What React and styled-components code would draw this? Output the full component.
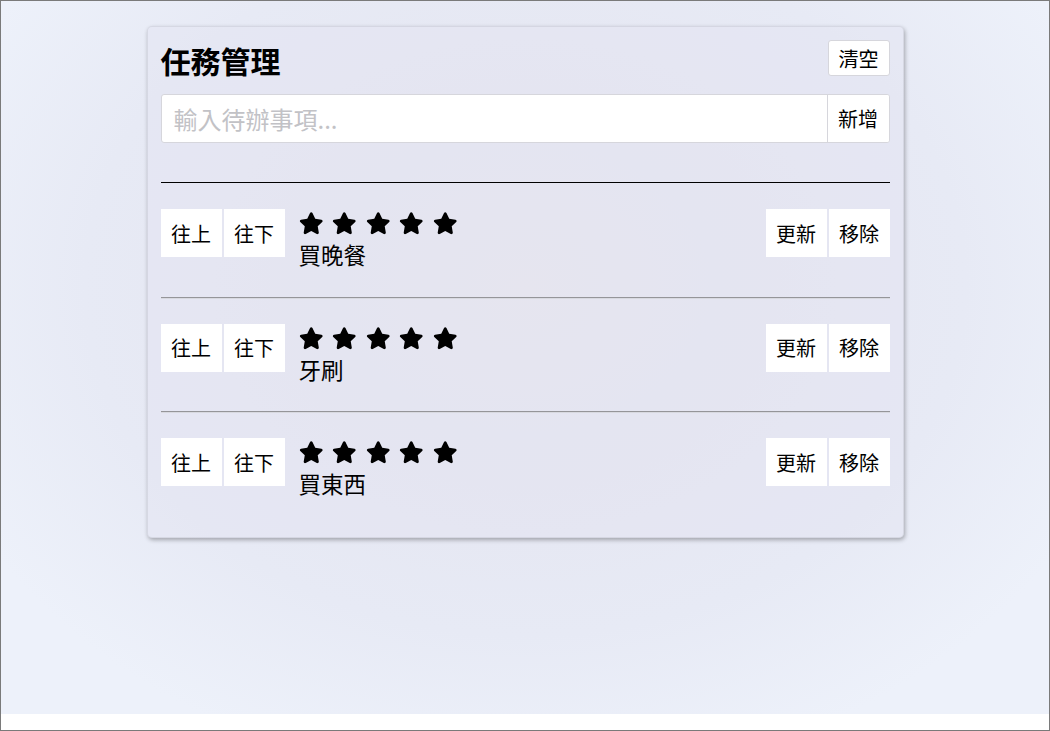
import React, { useState } from "react";
import styled, { createGlobalStyle } from "styled-components";
import { FaStar } from "react-icons/fa";

const Global = createGlobalStyle`
  html, body { margin: 0; padding: 0; background: #fff; }
  * { box-sizing: border-box; }
  body { font-family: "Noto Sans CJK TC", "Noto Sans", sans-serif; color: #000; }
`;

const Frame = styled.div`
  height: 731px;
  border: 1px solid #7a7a7a;
  background: #fff;
`;

const Backdrop = styled.div`
  height: 713px;
  padding-top: 25px;
  background: radial-gradient(ellipse 60% 70% at 50% 40%, #e8e7ef 0%, #e5e6f1 30%, #e7eaf5 70%, #edf1fa 100%);
`;

const Card = styled.div`
  width: 757px;
  margin: 0 auto;
  padding: 13px 13px 11px 13px;
  border: 1px solid rgba(0, 0, 0, 0.07);
  border-radius: 5px;
  background: rgba(225, 227, 240, 0.35);
  box-shadow: 1px 2px 4px rgba(0, 0, 0, 0.3);
`;

const Header = styled.div`
  display: flex;
  align-items: center;
  justify-content: space-between;
  height: 36px;
`;

const Title = styled.h1`
  margin: 0;
  font-size: 30px;
  font-weight: 700;
  line-height: 36px;
  position: relative;
  top: 2px;
`;

const SmallButton = styled.button`
  height: 36px;
  padding: 0 10px;
  font-family: inherit;
  font-size: 20px;
  color: #000;
  background: #fff;
  border: 1px solid #d6d6dc;
  border-radius: 3px;
`;

const InputGroup = styled.div`
  display: flex;
  margin-top: 18px;
  height: 49px;
  background: #fff;
  border: 1px solid #d6d6dc;
  border-radius: 3px;
  overflow: hidden;
`;

const TextInput = styled.input`
  flex: 1;
  border: none;
  outline: none;
  padding: 0 12px;
  font-family: inherit;
  font-size: 24px;
  background: transparent;
  &::placeholder { color: #c2c2c6; }
`;

const AddButton = styled.button`
  width: 62px;
  border: none;
  border-left: 1px solid #d6d6dc;
  background: #fff;
  font-family: inherit;
  font-size: 20px;
  color: #000;
  padding: 0;
`;

const List = styled.ul`
  list-style: none;
  margin: 39px 0 0;
  padding: 0;
  border-top: 1px solid #000;
`;

const Row = styled.li`
  display: flex;
  align-items: flex-start;
  justify-content: space-between;
  padding: 26px 0;
  border-bottom: ${(p) => (p.$last ? "none" : "1px solid #959599")};
  box-shadow: ${(p) => (p.$last ? "none" : "0 1px 0 #d8d9e0")};
`;

const Left = styled.div`
  display: flex;
  align-items: flex-start;
  gap: 14px;
`;

const BtnPair = styled.div`
  display: flex;
  gap: 2px;
`;

const RowButton = styled.button`
  height: 48px;
  width: 61px;
  padding: 0;
  border: none;
  background: #fff;
  font-family: inherit;
  font-size: 20px;
  color: #000;
`;

const Info = styled.div`
  display: flex;
  flex-direction: column;
`;

const Stars = styled.div`
  display: flex;
  gap: 9px;
  height: 29px;
  padding-top: 2px;
  font-size: 24.5px;
  line-height: 0;
`;

const Name = styled.div`
  font-size: 22.5px;
  line-height: 32.5px;
`;

const initial = ["買晚餐", "牙刷", "買東西"];

export default function App() {
  const [items] = useState(initial);
  return (
    <>
      <Global />
      <Frame>
        <Backdrop>
          <Card>
            <Header>
              <Title>任務管理</Title>
              <SmallButton>清空</SmallButton>
            </Header>
            <InputGroup>
              <TextInput placeholder="輸入待辦事項..." />
              <AddButton>新增</AddButton>
            </InputGroup>
            <List>
              {items.map((name, i) => (
                <Row key={name} $last={i === items.length - 1}>
                  <Left>
                    <BtnPair>
                      <RowButton>往上</RowButton>
                      <RowButton>往下</RowButton>
                    </BtnPair>
                    <Info>
                      <Stars>
                        {[0, 1, 2, 3, 4].map((s) => (
                          <FaStar key={s} />
                        ))}
                      </Stars>
                      <Name>{name}</Name>
                    </Info>
                  </Left>
                  <BtnPair>
                    <RowButton>更新</RowButton>
                    <RowButton>移除</RowButton>
                  </BtnPair>
                </Row>
              ))}
            </List>
          </Card>
        </Backdrop>
      </Frame>
    </>
  );
}
